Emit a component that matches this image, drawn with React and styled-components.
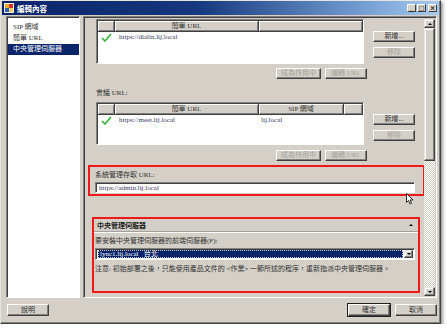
import React from 'react';
import styled, { createGlobalStyle } from 'styled-components';

const GlobalStyle = createGlobalStyle`
  html, body { margin: 0; padding: 0; background: #fff; }
  body {
    font-family: "Liberation Serif", "Noto Sans CJK TC", serif;
    font-size: 7px;
    color: #2a2a2a;
  }
  * { box-sizing: border-box; }
`;

const Window = styled.div`
  position: relative;
  width: 441px;
  height: 324px;
  background: #d4d0c8;
  border: 1px solid;
  border-color: #e6e4de #404040 #404040 #e6e4de;
  box-shadow: inset -1px -1px 0 #808080, 2px 2px 3px rgba(0, 0, 0, 0.4);
  display: flex;
  flex-direction: column;
`;

const TitleBar = styled.div`
  height: 14px;
  margin: 0 1px;
  display: flex;
  align-items: center;
  gap: 3px;
  padding: 0 2px;
  background: linear-gradient(90deg, #0a246a 0%, #16387e 45%, #6d97cc 80%, #a6caf0 100%);
  color: #fff;
  font-weight: bold;
  font-size: 7.5px;
`;

const TitleText = styled.span`
  flex: 1;
`;

const WinButtons = styled.div`
  display: flex;
  gap: 1px;
  & > :last-child { margin-left: 1px; }
`;

const WinButton = styled.div`
  width: 9px;
  height: 8px;
  background: #d4d0c8;
  border: 1px solid;
  border-color: #fff #404040 #404040 #fff;
  color: #000;
  font-size: 6px;
  line-height: 6px;
  text-align: center;
  font-family: "DejaVu Sans", sans-serif;
  font-weight: bold;
`;

const Body = styled.div`
  display: flex;
  gap: 3px;
  padding: 1px 3px 0 5px;
  height: 283px;
`;

const NavList = styled.div`
  width: 74px;
  background: #fff;
  border: 1px solid;
  border-color: #808080 #fff #fff #808080;
  box-shadow: inset 1px 1px 0 #404040;
  padding-top: 5px;
  padding-left: 1px;
`;

const NavItem = styled.div`
  height: 11px;
  line-height: 11px;
  padding-left: 5px;
  background: ${p => (p.$active ? '#0a246a' : 'transparent')};
  color: ${p => (p.$active ? '#fff' : '#333')};
`;

const MainPanel = styled.div`
  flex: 1;
  display: flex;
  border: 1px solid;
  border-color: #808080 #fff #fff #808080;
  box-shadow: inset 1px 1px 0 #404040, inset -1px -1px 0 #d4d0c8;
  padding: 2px 1px 1px 2px;
  overflow: hidden;
`;

const Content = styled.div`
  position: relative;
  flex: 1;
  overflow: hidden;
  display: flex;
  flex-direction: column;
  padding-left: 10px;
`;

const Scrollbar = styled.div`
  width: 11px;
  display: flex;
  flex-direction: column;
  background: repeating-conic-gradient(#fff 0 25%, #d4d0c8 0 50%) 0 0 / 2px 2px;
`;

const ScrollBtn = styled.div`
  height: 9px;
  background: #d4d0c8;
  border: 1px solid;
  border-color: #e6e4de #404040 #404040 #e6e4de;
  box-shadow: inset -1px -1px 0 #808080, inset 1px 1px 0 #fff;
  display: flex;
  align-items: center;
  justify-content: center;
`;

const ScrollThumb = styled.div`
  height: 133px;
  background: #d4d0c8;
  border: 1px solid;
  border-color: #e6e4de #404040 #404040 #e6e4de;
  box-shadow: inset -1px -1px 0 #808080, inset 1px 1px 0 #fff;
`;

const ScrollTrack = styled.div`
  flex: 1;
`;

const Arrow = styled.div`
  width: 0;
  height: 0;
  border-left: 2px solid transparent;
  border-right: 2px solid transparent;
  ${p => (p.$down ? 'border-top: 2px solid #000;' : 'border-bottom: 2px solid #000;')}
`;

const TableRow = styled.div`
  display: flex;
  gap: 9px;
  margin-top: ${p => p.$mt || 0}px;
`;

const Table = styled.div`
  width: 268px;
  height: ${p => p.$h}px;
  background: #fff;
  border: 1px solid;
  border-color: #808080 #fff #fff #808080;
  box-shadow: inset 1px 1px 0 #404040;
  padding: 1px 0 0 1px;
  display: flex;
  flex-direction: column;
`;

const Grid = styled.div`
  display: grid;
  grid-template-columns: ${p => p.$cols};
`;

const HeadCell = styled.div`
  height: 11px;
  line-height: 10px;
  text-align: center;
  background: #d4d0c8;
  border-right: 1px solid #404040;
  border-bottom: 1px solid #404040;
  box-shadow: inset 1px 1px 0 #fff, inset -1px -1px 0 #808080;
  color: #333;
`;

const Cell = styled.div`
  height: 10px;
  line-height: 10px;
  padding-left: ${p => p.$pl || 3}px;
  display: flex;
  align-items: center;
  color: #3a3560;
  white-space: nowrap;
`;

const SideButtons = styled.div`
  display: flex;
  flex-direction: column;
  gap: 5px;
  padding-top: 12px;
`;

const Button = styled.div`
  width: ${p => p.$w || 42}px;
  height: ${p => p.$h || 11}px;
  display: flex;
  align-items: center;
  justify-content: center;
  background: #d4d0c8;
  border: 1px solid;
  border-color: #fff #404040 #404040 #fff;
  box-shadow: inset -1px -1px 0 #808080;
  color: ${p => (p.$disabled ? '#a4a29c' : '#333')};
  outline: ${p => (p.$default ? '1px solid #202020' : 'none')};
  white-space: nowrap;
  line-height: 1;
`;

const ButtonRow = styled.div`
  width: 271px;
  display: flex;
  justify-content: flex-end;
  gap: 4px;
  margin-top: ${p => p.$mt}px;
`;

const Label = styled.div`
  height: 11px;
  line-height: 11px;
  margin-top: ${p => p.$mt || 0}px;
  color: #333;
  white-space: nowrap;
`;

const Highlight = styled.div`
  border: 2px solid #f01818;
  margin-left: ${p => p.$ml}px;
  width: ${p => p.$w}px;
  margin-top: ${p => p.$mt}px;
  height: ${p => p.$h}px;
  padding-left: ${p => p.$pl || 0}px;
  flex-shrink: 0;
`;

const TextInput = styled.div`
  width: 320px;
  height: 11px;
  margin-top: ${p => p.$mt || 0}px;
  background: #fff;
  border: 1px solid;
  border-color: #808080 #fff #fff #808080;
  box-shadow: inset 1px 1px 0 #404040;
  padding-left: 3px;
  color: #3a3560;
  display: flex;
  align-items: center;
`;

const GroupHeader = styled.div`
  height: 13px;
  display: flex;
  align-items: center;
  justify-content: space-between;
  padding: 0 5px 0 3px;
  font-weight: bold;
  color: #222;
  border-bottom: 1px solid #a0a0a0;
  box-shadow: 0 1px 0 #fff;
`;

const GroupBody = styled.div`
  padding-left: 1px;
`;

const Combo = styled.div`
  width: 320px;
  height: 12px;
  margin-top: 1px;
  background: #fff;
  border: 1px solid;
  border-color: #808080 #fff #fff #808080;
  box-shadow: inset 1px 1px 0 #404040;
  padding: 1px 1px 1px 2px;
  display: flex;
  align-items: stretch;
  gap: 1px;
`;

const ComboValue = styled.div`
  flex: 1;
  background: #0a246a;
  color: #fff;
  outline: 1px dotted #c8c8c8;
  outline-offset: -1px;
  padding-left: 2px;
  display: flex;
  align-items: center;
  white-space: pre;
  line-height: 1;
`;

const ComboButton = styled(ScrollBtn)`
  width: 9px;
  height: auto;
`;

const Footer = styled.div`
  flex: 1;
  display: flex;
  justify-content: space-between;
  padding: 6px 3px 0 6px;
`;

const FooterRight = styled.div`
  display: flex;
  gap: 5px;
`;

const Cursor = styled.svg`
  position: absolute;
  left: 405px;
  top: 192px;
`;

const Check = () => (
  <svg width="11" height="9" viewBox="0 0 11 9">
    <path d="M1 5 L4 8 L10 1" fill="none" stroke="#34b234" strokeWidth="1.6" />
  </svg>
);

const AppIcon = () => (
  <svg width="10" height="10" viewBox="0 0 10 10">
    <rect x="0" y="0" width="10" height="10" fill="#f4f0e0" />
    <rect x="1" y="1" width="4" height="4" fill="#e8b020" />
    <rect x="5" y="1" width="4" height="4" fill="#d03030" />
    <rect x="1" y="5" width="4" height="4" fill="#3060c0" />
    <rect x="5" y="5" width="4" height="4" fill="#f0d060" />
  </svg>
);

const App = () => {
  return (
    <>
      <GlobalStyle />
      <Window>
        <TitleBar>
          <AppIcon />
          <TitleText>編輯內容</TitleText>
          <WinButtons>
            <WinButton>_</WinButton>
            <WinButton>□</WinButton>
            <WinButton>×</WinButton>
          </WinButtons>
        </TitleBar>
        <Body>
          <NavList>
            <NavItem>SIP 網域</NavItem>
            <NavItem>簡單 URL</NavItem>
            <NavItem $active>中央管理伺服器</NavItem>
          </NavList>
          <MainPanel>
            <Content>
              <TableRow>
                <Table $h={45}>
                  <Grid $cols="17px 144px 1fr">
                    <HeadCell />
                    <HeadCell>簡單 URL</HeadCell>
                    <HeadCell />
                    <Cell><Check /></Cell>
                    <Cell $pl={4}>https://dialin.lij.local</Cell>
                    <Cell />
                  </Grid>
                </Table>
                <SideButtons>
                  <Button>新增...</Button>
                  <Button $disabled>移除</Button>
                </SideButtons>
              </TableRow>
              <ButtonRow $mt={4}>
                <Button $w={45} $disabled>成為作用中</Button>
                <Button $disabled>編輯 URL</Button>
              </ButtonRow>
              <Label $mt={9}>會議 URL:</Label>
              <TableRow $mt={3}>
                <Table $h={43}>
                  <Grid $cols="17px 144px 85px 1fr">
                    <HeadCell />
                    <HeadCell>簡單 URL</HeadCell>
                    <HeadCell>SIP 網域</HeadCell>
                    <HeadCell />
                    <Cell><Check /></Cell>
                    <Cell $pl={4}>https://meet.lij.local</Cell>
                    <Cell $pl={2}>lij.local</Cell>
                    <Cell />
                  </Grid>
                </Table>
                <SideButtons>
                  <Button>新增...</Button>
                  <Button $disabled>移除</Button>
                </SideButtons>
              </TableRow>
              <ButtonRow $mt={5}>
                <Button $w={45} $disabled>成為作用中</Button>
                <Button $disabled>編輯 URL</Button>
              </ButtonRow>
              <Highlight $ml={-8} $w={337} $mt={4} $h={31} $pl={5}>
                <Label $mt={3}>系統管理存取 URL:</Label>
                <TextInput $mt={1}>https://admin.lij.local</TextInput>
              </Highlight>
              <Highlight $ml={-4} $w={328} $mt={21} $h={76}>
                <GroupHeader>
                  <span>中央管理伺服器</span>
                  <Arrow />
                </GroupHeader>
                <GroupBody>
                  <Label $mt={4}>要安裝中央管理伺服器的前端伺服器(F):</Label>
                  <Combo>
                    <ComboValue>lync1.lij.local   台北</ComboValue>
                    <ComboButton><Arrow $down /></ComboButton>
                  </Combo>
                  <Label $mt={4}>注意: 初始部署之後，只能使用產品文件的 &lt;作業&gt; 一節所述的程序，重新指派中央管理伺服器。</Label>
                </GroupBody>
              </Highlight>
            </Content>
            <Scrollbar>
              <ScrollBtn><Arrow /></ScrollBtn>
              <ScrollThumb />
              <ScrollTrack />
              <ScrollBtn><Arrow $down /></ScrollBtn>
            </Scrollbar>
          </MainPanel>
        </Body>
        <Footer>
          <Button $h={12}>說明</Button>
          <FooterRight>
            <Button $h={12} $default>確定</Button>
            <Button $h={12}>取消</Button>
          </FooterRight>
        </Footer>
        <Cursor width="8" height="12" viewBox="0 0 8 12">
          <path d="M0.5 0.5 L0.5 9.5 L2.5 7.5 L4 11 L5.5 10.3 L4 7 L7 7 Z" fill="#fff" stroke="#000" strokeWidth="0.8" />
        </Cursor>
      </Window>
    </>
  );
};

export default App;
